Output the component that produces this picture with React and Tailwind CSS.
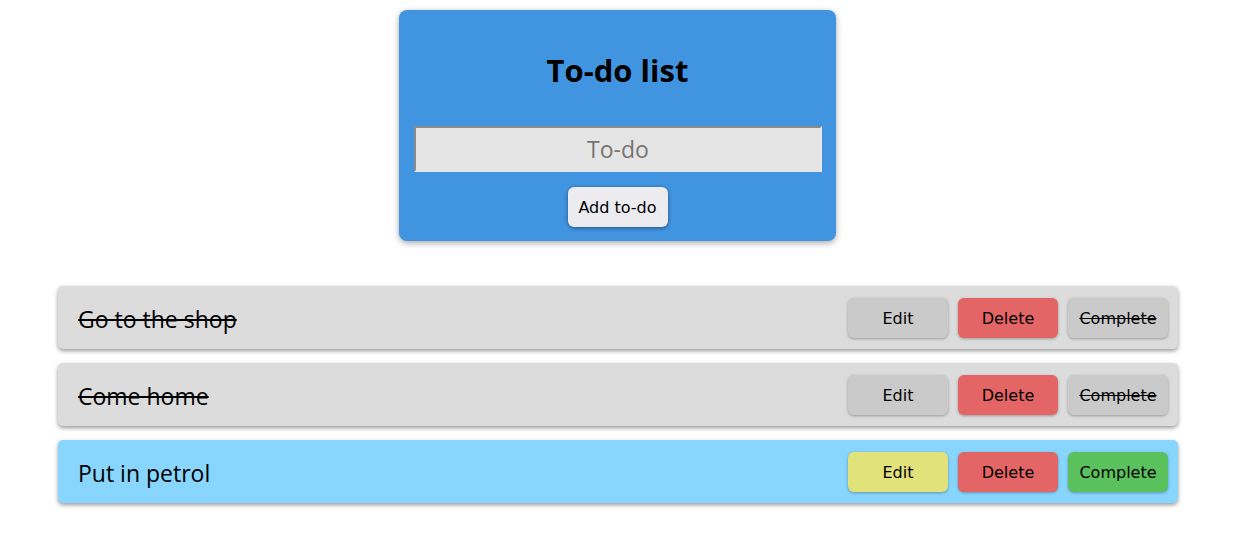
const todos = [
  { text: "Go to the shop", done: true },
  { text: "Come home", done: true },
  { text: "Put in petrol", done: false },
];

const btnFont = { fontFamily: "Tahoma, 'DejaVu Sans', sans-serif" };

export default function App() {
  return (
    <div
      className="min-h-screen bg-white pt-[10px]"
      style={{ fontFamily: "'Segoe UI', 'Open Sans', sans-serif" }}
    >
      {/* Add card */}
      <div className="ml-[399px] w-[437px] rounded-lg bg-[#4195e0] px-[15px] pb-[14px] shadow-[0_2px_6px_rgba(0,0,0,0.35)]">
        <h1 className="pt-[38px] text-center text-[31px] font-bold leading-[44px] text-black">
          To-do list
        </h1>
        <input
          placeholder="To-do"
          className="mt-[34px] block h-[46px] w-[408px] border-2 border-t-[#8a8a8a] border-l-[#8a8a8a] border-r-[#e5e5e5] border-b-[#e5e5e5] bg-[#e5e5e5] text-center text-[23px] text-black outline-none placeholder:text-[#757575]"
        />
        <div className="mt-[15px] flex justify-center">
          <button
            className="h-[40px] w-[100px] rounded-md bg-[#ebebf0] pt-[2px] text-[16px] text-black shadow-[0_1px_4px_rgba(0,0,0,0.45)]"
            style={btnFont}
          >
            Add to-do
          </button>
        </div>
      </div>

      {/* List */}
      <div className="ml-[58px] mt-[45px] flex w-[1120px] flex-col gap-[14px]">
        {todos.map((t) => (
          <div
            key={t.text}
            className={`flex h-[63px] items-center justify-between rounded-[5px] pl-[20px] pr-[10px] shadow-[0_2px_4px_rgba(0,0,0,0.4)] ${
              t.done ? "bg-[#dcdcdc]" : "bg-[#88d5fd]"
            }`}
          >
            <span
              className={`pt-[4px] text-[23px] text-black ${
                t.done ? "line-through" : ""
              }`}
            >
              {t.text}
            </span>
            <div className="flex gap-[10px]" style={btnFont}>
              <button
                className={`h-[40px] w-[100px] rounded-md pt-[2px] text-[16px] text-black shadow-[0_1px_3px_rgba(0,0,0,0.3)] ${
                  t.done ? "bg-[#cacaca]" : "bg-[#e2e27a]"
                }`}
              >
                Edit
              </button>
              <button className="h-[40px] w-[100px] rounded-md bg-[#e46565] pt-[2px] text-[16px] text-black shadow-[0_1px_3px_rgba(0,0,0,0.3)]">
                Delete
              </button>
              <button
                className={`h-[40px] w-[100px] rounded-md pt-[2px] text-[16px] text-black shadow-[0_1px_3px_rgba(0,0,0,0.3)] ${
                  t.done ? "bg-[#cacaca] line-through" : "bg-[#5ac15c]"
                }`}
              >
                Complete
              </button>
            </div>
          </div>
        ))}
      </div>
    </div>
  );
}
